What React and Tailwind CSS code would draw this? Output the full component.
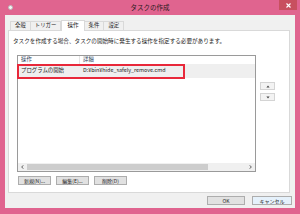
import React from 'react';

const font = { fontFamily: '"Noto Sans CJK JP", "Noto Sans", sans-serif' };

const tabs = ['全般', 'トリガー', '操作', '条件', '設定'];

const Btn = ({ children, className = '' }) => (
  <div
    className={`h-[9px] flex items-center justify-center bg-[#e1e1e1] border border-[#adadad] text-[5px] leading-none text-[#222] ${className}`}
  >
    {children}
  </div>
);

const Tab = ({ label, active }) =>
  active ? (
    <div className="h-[11px] -mb-px px-[5px] bg-white border border-b-0 border-[#d9d9d9] flex items-center text-[5.6px] leading-none z-10">
      {label}
    </div>
  ) : (
    <div className="h-[9px] px-[4px] bg-[#f0f0f0] border border-b-0 border-[#d9d9d9] flex items-center text-[5.4px] leading-none -ml-px first:ml-0">
      {label}
    </div>
  );

const App = () => {
  return (
    <div className="w-[300px] h-[214px] bg-[#e0648f] flex flex-col text-[#1e1e1e] overflow-hidden" style={font}>
      {/* title bar */}
      <div className="relative h-[15px] shrink-0 flex items-center justify-center">
        <div className="absolute left-[8px] top-[5px] w-[5px] h-[5px] rounded-full bg-[#f4f4f4] border border-[#b9b9b9]" />
        <span className="text-[6.5px] leading-none text-[#2a1a20] -mt-[1px]">タスクの作成</span>
        <div className="absolute right-[3px] top-0 w-[18px] h-[10px] bg-[#c8505f] flex items-center justify-center">
          <svg width="5" height="5" viewBox="0 0 5 5">
            <path d="M0.5 0.5 L4.5 4.5 M4.5 0.5 L0.5 4.5" stroke="#fff" strokeWidth="1.1" />
          </svg>
        </div>
      </div>

      {/* client area */}
      <div className="flex-1 mx-[5px] mb-[6px] bg-[#f0f0f0] flex flex-col pl-[3px] pr-[5px] pt-[5px]">
        <div className="flex items-end ml-[2px] h-[10px]">
          {tabs.map((t) => (
            <Tab key={t} label={t} active={t === '操作'} />
          ))}
        </div>

        <div className="w-[282px] h-[163px] bg-white border border-[#d9d9d9] flex flex-col">
          <p className="ml-[4px] mt-[6px] h-[8px] leading-[8px] text-[5.6px] whitespace-nowrap">
            タスクを作成する場合、タスクの開始時に発生する操作を指定する必要があります。
          </p>

          <div className="flex mt-[10px] ml-[8px]">
            <div className="w-[239px] h-[117px] border border-[#9a9a9a] flex flex-col">
              <div className="h-[8px] flex items-center text-[5.4px] leading-none text-[#2b3e5a]">
                <span className="w-[62px] pl-[3px] border-r border-[#e5e5e5] h-full flex items-center">操作</span>
                <span className="pl-[3px]">詳細</span>
              </div>
              <div className="relative h-[14px] flex items-center text-[5.4px] leading-none bg-[#efefef]">
                <span className="w-[62px] pl-[3px]">プログラムの開始</span>
                <span className="pl-[3px]">D:¥bin¥hide_safely_remove.cmd</span>
                <div className="absolute -left-[1px] top-0 w-[168px] h-[15px] border-[2px] border-[#e8283a]" />
              </div>
              <div className="flex-1" />
              <div className="h-[8px] flex items-center bg-[#f0f0f0]">
                <div className="w-[9px] flex justify-center">
                  <svg width="3" height="4" viewBox="0 0 3 4">
                    <path d="M2.5 0.3 L0.6 2 L2.5 3.7" stroke="#555" strokeWidth="0.9" fill="none" />
                  </svg>
                </div>
                <div className="w-[181px] h-[6px] bg-[#cdcdcd]" />
                <div className="flex-1" />
                <div className="w-[9px] flex justify-center">
                  <svg width="3" height="4" viewBox="0 0 3 4">
                    <path d="M0.5 0.3 L2.4 2 L0.5 3.7" stroke="#555" strokeWidth="0.9" fill="none" />
                  </svg>
                </div>
              </div>
            </div>

            <div className="ml-[4px] pt-[27px] flex flex-col gap-[3px]">
              <div className="w-[15px] h-[8px] bg-[#f3f3f3] border border-[#d4d4d4] flex items-center justify-center">
                <svg width="4" height="3" viewBox="0 0 4 3">
                  <path d="M2 0.5 L3.6 2.5 L0.4 2.5 Z" fill="#444" />
                </svg>
              </div>
              <div className="w-[15px] h-[8px] bg-[#f3f3f3] border border-[#d4d4d4] flex items-center justify-center">
                <svg width="4" height="3" viewBox="0 0 4 3">
                  <path d="M0.4 0.5 L3.6 0.5 L2 2.5 Z" fill="#444" />
                </svg>
              </div>
            </div>
          </div>

          <div className="flex gap-[5px] mt-[4px] ml-[9px]">
            <Btn className="w-[33px]">新規(N)...</Btn>
            <Btn className="w-[33px]">編集(E)...</Btn>
            <Btn className="w-[33px]">削除(D)</Btn>
          </div>
        </div>

        <div className="flex justify-end gap-[7px] mt-[3px] -mr-[2px]">
          <Btn className="w-[38px]">OK</Btn>
          <Btn className="w-[40px] border-[#3c84c8] bg-[#e5f1fb]">キャンセル</Btn>
        </div>
      </div>
    </div>
  );
};

export default App;
